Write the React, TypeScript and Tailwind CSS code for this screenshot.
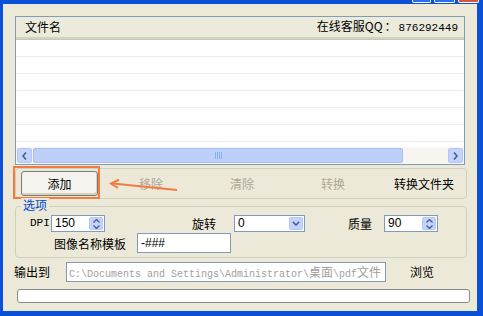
const cjk = { fontFamily: '"Noto Sans CJK SC", "Liberation Sans", sans-serif' };
const mono = { fontFamily: '"Liberation Mono", "Noto Sans CJK SC", monospace' };

function SpinButton() {
    return (
        <div className="w-[16px] h-full p-px bg-white">
            <div className="w-full h-full flex flex-col items-center justify-center gap-[2px] rounded-[2px] bg-[#C3D3FD] border border-[#B5C8F3]">
                <svg width="7" height="4" viewBox="0 0 7 4"><path d="M0.5 3.5 L3.5 0.5 L6.5 3.5" fill="none" stroke="#4D6185" strokeWidth="1.4" /></svg>
                <svg width="7" height="4" viewBox="0 0 7 4"><path d="M0.5 0.5 L3.5 3.5 L6.5 0.5" fill="none" stroke="#4D6185" strokeWidth="1.4" /></svg>
            </div>
        </div>
    );
}

function SpinBox({ value, width }: { value: string; width: string }) {
    return (
        <div className={`${width} h-[17px] flex items-stretch bg-white border border-[#7F9DB9]`}>
            <div className="flex-1 pl-[3px] text-[12px] leading-[15px] text-black" style={{ fontFamily: '"Liberation Sans", sans-serif' }}>{value}</div>
            <SpinButton />
        </div>
    );
}

function ScrollArrow({ dir }: { dir: "left" | "right" }) {
    return (
        <div className="w-[15px] h-[15px] rounded-[2px] bg-[#C3D3FD] border border-[#B5C8F3] flex items-center justify-center">
            <svg width="5" height="8" viewBox="0 0 5 8">
                {dir === "left"
                    ? <path d="M4 0.5 L1 4 L4 7.5" fill="none" stroke="#4D6185" strokeWidth="1.6" />
                    : <path d="M1 0.5 L4 4 L1 7.5" fill="none" stroke="#4D6185" strokeWidth="1.6" />}
            </svg>
        </div>
    );
}

export default function App() {
    const rows = [0, 1, 2, 3, 4, 5];
    return (
        <div className="relative w-[483px] h-[316px] bg-[#0B50D8] pt-[4px] pl-[3px] pr-[6px] pb-[5px] overflow-hidden" style={cjk}>
            {/* title bar button bottoms */}
            <div className="absolute top-0 left-[412px] w-[19px] h-[3px] bg-[#2B6CF0] border-x border-b border-white rounded-b-[2px]" />
            <div className="absolute top-0 left-[434px] w-[21px] h-[3px] bg-[#2B6CF0] border-x border-b border-white rounded-b-[2px]" />
            <div className="absolute top-0 left-[458px] w-[21px] h-[3px] bg-[#D9553A] border-x border-b border-white rounded-b-[2px]" />

            <div className="relative w-full h-full bg-[#ECE9D8] flex flex-col">
                {/* file list */}
                <div className="mt-[12px] ml-[12px] w-[450px] h-[149px] border border-[#7F9DB9] bg-white flex flex-col">
                    <div className="h-[20px] shrink-0 flex items-center justify-between pl-[9px] pr-[6px] bg-[#EBEADB] text-[12px] text-black">
                        <span>文件名</span>
                        <span>在线客服QQ<span className="mx-[2px]">：</span><span style={mono} className="text-[11px]">876292449</span></span>
                    </div>
                    <div className="h-[3px] shrink-0 bg-[#D6D2C2] border-b border-[#CBC7B8]" />
                    <div className="flex-1 overflow-hidden">
                        {rows.map((r) => (
                            <div key={r} className="h-[17px] border-b border-[#EDEDED]" />
                        ))}
                    </div>
                    <div className="h-[17px] shrink-0 flex items-center gap-px px-px bg-[#F6F5F0]">
                        <ScrollArrow dir="left" />
                        <div className="w-[370px] h-[15px] rounded-[2px] bg-[#BCD0FA] border border-[#A9C0F0] flex items-center justify-center gap-[1px]">
                            {[0, 1, 2, 3].map((i) => (
                                <div key={i} className="w-[1px] h-[7px] bg-[#EEF4FE] border-r border-[#8CB0F8]" />
                            ))}
                        </div>
                        <div className="flex-1" />
                        <ScrollArrow dir="right" />
                    </div>
                </div>

                {/* action buttons */}
                <div className="relative mt-[3px] ml-[12px] w-[452px] h-[31px] rounded-[4px] border border-[#D0D0BF] flex items-center text-[12px]">
                    <div className="absolute left-[-3px] top-[-3px] w-[87px] h-[33px] border-2 border-[#F57A40]" />
                    <button className="ml-[5px] w-[77px] h-[25px] rounded-[3px] bg-[#F4F3EE] border border-[#7A7A7A] text-black shadow-[inset_-1px_-2px_0_#D8D2BD]">添加</button>
                    <span className="absolute left-[123px] text-[#ACA899]">移除</span>
                    <span className="absolute left-[214px] text-[#ACA899]">清除</span>
                    <span className="absolute left-[305px] text-[#ACA899]">转换</span>
                    <span className="absolute left-[378px] text-black">转换文件夹</span>
                    <svg className="absolute left-[93px] top-[10px]" width="70" height="14" viewBox="0 0 70 14">
                        <path d="M68 11 L4 4.5" stroke="#F57A40" strokeWidth="2" fill="none" />
                        <path d="M10 0.5 L2 4.5 L9 9" stroke="#F57A40" strokeWidth="2" fill="none" />
                    </svg>
                </div>

                {/* options */}
                <div className="relative mt-[7px] ml-[12px] w-[452px] h-[52px] rounded-[4px] border border-[#D0D0BF] text-[12px] text-black">
                    <span className="absolute left-[5px] top-[-9px] px-[2px] bg-[#ECE9D8] text-[#0046D5] leading-[14px]">选项</span>
                    <div className="absolute left-[14px] top-[8px] flex items-center gap-[1px]">
                        <span style={mono} className="text-[11px] w-[20px]">DPI</span>
                        <SpinBox value="150" width="w-[54px]" />
                    </div>
                    <span className="absolute left-[176px] top-[8px]">旋转</span>
                    <div className="absolute left-[218px] top-[8px] w-[71px] h-[17px] flex items-stretch bg-white border border-[#7F9DB9]">
                        <div className="flex-1 pl-[3px] text-[12px] leading-[15px]" style={{ fontFamily: '"Liberation Sans", sans-serif' }}>0</div>
                        <div className="w-[16px] p-px">
                            <div className="w-full h-full rounded-[2px] bg-[#C3D3FD] border border-[#B5C8F3] flex items-center justify-center">
                                <svg width="8" height="5" viewBox="0 0 8 5"><path d="M0.8 0.8 L4 4 L7.2 0.8" fill="none" stroke="#4D6185" strokeWidth="1.6" /></svg>
                            </div>
                        </div>
                    </div>
                    <span className="absolute left-[332px] top-[8px]">质量</span>
                    <div className="absolute left-[368px] top-[8px]">
                        <SpinBox value="90" width="w-[54px]" />
                    </div>
                    <span className="absolute left-[38px] top-[28px]">图像名称模板</span>
                    <div className="absolute left-[121px] top-[26px] w-[94px] h-[20px] bg-white border border-[#7F9DB9] pl-[3px] leading-[18px]" style={{ fontFamily: '"Liberation Sans", sans-serif' }}>-###</div>
                </div>

                {/* output */}
                <div className="mt-[4px] ml-[11px] flex items-center h-[20px] text-[12px]">
                    <span className="w-[52px]">输出到</span>
                    <div className="w-[320px] h-[20px] border border-[#7F9DB9] bg-white px-[2px] leading-[18px] text-[#A0A0A0] whitespace-nowrap overflow-hidden text-[10px]" style={mono}>
                        C:\Documents and Settings\Administrator\<span className="text-[12px]" style={cjk}>桌面</span>\pdf<span className="text-[12px]" style={cjk}>文件</span>
                    </div>
                    <span className="ml-[24px]">浏览</span>
                </div>

                {/* progress */}
                <div className="mt-[7px] ml-[14px] w-[453px] h-[14px] rounded-[3px] border border-[#8C8C8C] bg-white" />
            </div>
        </div>
    );
}
